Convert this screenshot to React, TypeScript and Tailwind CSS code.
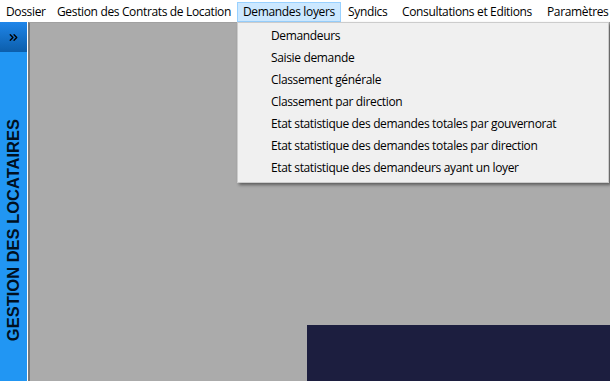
import { ChevronsRight } from 'lucide-react';

const menus = [
  { label: 'Dossier', w: 'w-[51px] pl-[5px]' },
  { label: 'Gestion des Contrats de Location', w: 'w-[186px] pl-[5px]' },
  { label: 'Demandes loyers', w: 'w-[104px] pl-[5px]', active: true },
  { label: 'Syndics', w: 'w-[54px] pl-[6px]' },
  { label: 'Consultations et Editions', w: 'w-[145px] pl-[6px]' },
  { label: 'Paramètres', w: 'w-[69px] pl-[6px]' },
];

const items = [
  'Demandeurs',
  'Saisie demande',
  'Classement générale',
  'Classement par direction',
  'Etat statistique des demandes totales par gouvernorat',
  'Etat statistique des demandes totales par direction',
  'Etat statistique des demandeurs ayant un loyer',
];

export default function App() {
  return (
    <div className="relative w-[610px] h-[381px] overflow-hidden bg-[#f0f0f0] font-['Open_Sans','Noto_Sans',sans-serif] text-[12px] tracking-[-0.35px] text-black">
      {/* Menu bar */}
      <div className="flex h-[22px] items-center bg-white whitespace-nowrap">
        {menus.map((m) => (
          <div
            key={m.label}
            className={`${m.w} shrink-0 h-[20px] mt-[1px] flex items-center border ${
              m.active ? 'bg-[#cce8ff] border-[#99d1ff]' : 'border-transparent'
            }`}
          >
            {m.label}
          </div>
        ))}
      </div>

      <div className="flex h-[359px]">
        {/* Side panel */}
        <div className="w-[27px] flex flex-col bg-[#2196f3] shrink-0">
          <div className="h-[30px] bg-gradient-to-b from-[#1f86ea] to-[#0c5eab] flex items-center justify-center">
            <ChevronsRight size={13} strokeWidth={2.5} className="text-black" />
          </div>
          <div className="flex-1 flex items-start justify-center pt-[67px]">
            <span className="[writing-mode:vertical-rl] rotate-180 font-['Liberation_Sans',Arial,sans-serif] font-bold text-[16.5px] tracking-[0px] text-[#00101f] leading-none">
              GESTION DES LOCATAIRES
            </span>
          </div>
        </div>
        <div className="w-[1px] bg-white" />
        {/* MDI client */}
        <div className="flex-1 flex flex-col bg-[#ababab] border-t border-l-2 border-t-[#a0a0a0] border-l-[#7a7a7a]">
          <div className="flex-1" />
          <div className="h-[56px] ml-[277px] bg-[#1c1e3f]" />
        </div>
      </div>

      {/* Dropdown */}
      <div className="absolute left-[237px] top-[22px] w-[372px] bg-[#f0f0f0] border border-[#cccccc] shadow-[2px_2px_3px_rgba(0,0,0,0.45)] py-[2px] whitespace-nowrap">
        {items.map((it) => (
          <div key={it} className="h-[22px] flex items-center pl-[33px]">
            {it}
          </div>
        ))}
        <div className="h-[1px]" />
      </div>
    </div>
  );
}
